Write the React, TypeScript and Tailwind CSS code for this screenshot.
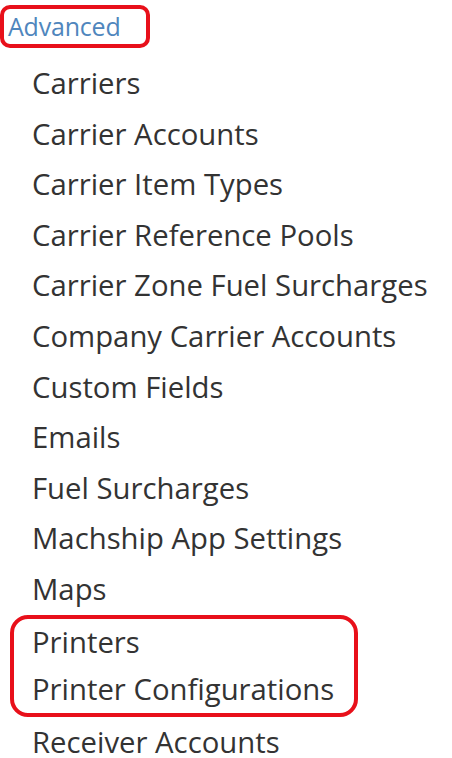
import React from 'react';

const before = [
  'Carriers',
  'Carrier Accounts',
  'Carrier Item Types',
  'Carrier Reference Pools',
  'Carrier Zone Fuel Surcharges',
  'Company Carrier Accounts',
  'Custom Fields',
  'Emails',
  'Fuel Surcharges',
  'Machship App Settings',
  'Maps',
];

const highlighted = ['Printers', 'Printer Configurations'];

const after = ['Receiver Accounts'];

export default function App() {
  return (
    <div className="w-[452px] h-[758px] overflow-hidden bg-white font-['Open_Sans',sans-serif]">
      {/* Section heading */}
      <div className="pt-[5px]">
        <div className="w-[150px] h-[43px] border-[4px] border-[#e8101a] rounded-[10px] flex items-center pl-[4px]">
          <span className="text-[25px] leading-none text-[#4f86bd] tracking-[-0.2px]">Advanced</span>
        </div>
      </div>

      {/* Menu items */}
      <ul className="mt-[10px] text-[29.3px] text-[#333] leading-[50.6px]">
        {before.map((item) => (
          <li key={item} className="pl-[32px] h-[50.6px] whitespace-nowrap">{item}</li>
        ))}
        <li className="ml-[10px] mr-[94px] border-[4px] border-[#e8101a] rounded-[18px] pl-[18px]">
          {highlighted.map((item) => (
            <div key={item} className="h-[47px] leading-[47px] whitespace-nowrap">{item}</div>
          ))}
        </li>
        {after.map((item) => (
          <li key={item} className="pl-[32px] h-[50.6px] whitespace-nowrap">{item}</li>
        ))}
      </ul>
    </div>
  );
}
